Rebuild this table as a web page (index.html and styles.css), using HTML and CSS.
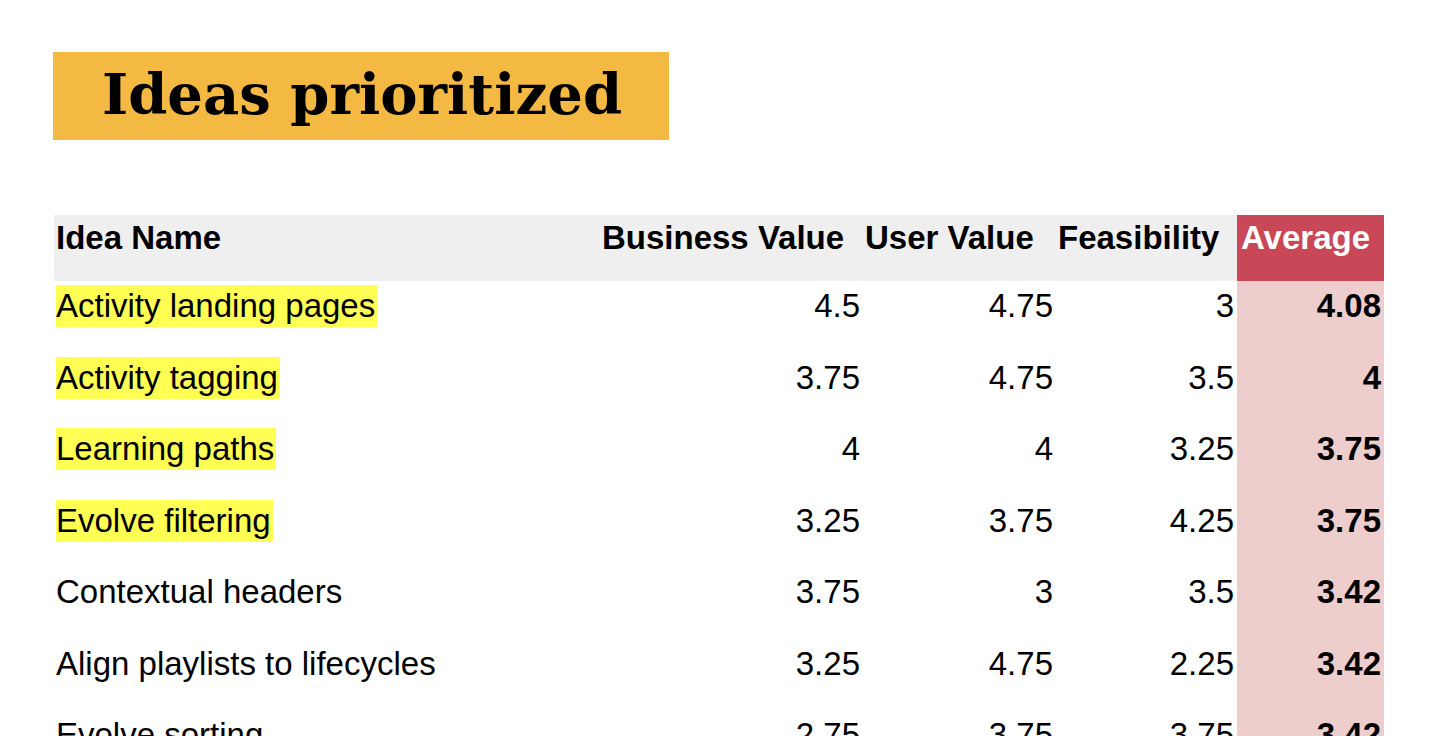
FILE: index.html
```html
<!DOCTYPE html>
<html lang="en">
<head>
<meta charset="utf-8">
<title>Ideas prioritized</title>
<link rel="stylesheet" href="styles.css">
</head>
<body>
<main class="slide">
  <h1 class="title">Ideas prioritized</h1>
  <table class="ideas">
    <colgroup>
      <col class="c-name"><col class="c-bv"><col class="c-uv"><col class="c-f"><col class="c-avg">
    </colgroup>
    <thead>
      <tr>
        <th class="name">Idea Name</th>
        <th>Business Value</th>
        <th>User Value</th>
        <th>Feasibility</th>
        <th class="avg">Average</th>
      </tr>
    </thead>
    <tbody>
      <tr><td class="name"><span class="hl">Activity landing pages</span></td><td>4.5</td><td>4.75</td><td>3</td><td class="avg">4.08</td></tr>
      <tr><td class="name"><span class="hl">Activity tagging</span></td><td>3.75</td><td>4.75</td><td>3.5</td><td class="avg">4</td></tr>
      <tr><td class="name"><span class="hl">Learning paths</span></td><td>4</td><td>4</td><td>3.25</td><td class="avg">3.75</td></tr>
      <tr><td class="name"><span class="hl">Evolve filtering</span></td><td>3.25</td><td>3.75</td><td>4.25</td><td class="avg">3.75</td></tr>
      <tr><td class="name">Contextual headers</td><td>3.75</td><td>3</td><td>3.5</td><td class="avg">3.42</td></tr>
      <tr><td class="name">Align playlists to lifecycles</td><td>3.25</td><td>4.75</td><td>2.25</td><td class="avg">3.42</td></tr>
      <tr><td class="name">Evolve sorting</td><td>2.75</td><td>3.75</td><td>3.75</td><td class="avg">3.42</td></tr>
    </tbody>
  </table>
</main>
</body>
</html>
```
FILE: styles.css
```css
html, body {
  margin: 0;
  padding: 0;
  background: #ffffff;
  overflow: hidden;
}

.slide {
  padding: 52px 0 0 53px;
}

.title {
  box-sizing: border-box;
  width: 616px;
  height: 88px;
  margin: 0;
  padding: 9px 0 0 49px;
  background: #f4b942;
  color: #000000;
  font-family: "DejaVu Serif", "Liberation Serif", serif;
  font-weight: bold;
  font-size: 56px;
  line-height: normal;
  white-space: nowrap;
}

.ideas {
  margin: 75px 0 0 1px;
  border-collapse: collapse;
  table-layout: fixed;
  width: 1330px;
  font-family: "Liberation Sans", Arial, sans-serif;
  font-size: 33px;
  line-height: 38px;
  color: #000000;
}

.c-name { width: 546px; }
.c-bv { width: 263px; }
.c-uv { width: 193px; }
.c-f { width: 181px; }
.c-avg { width: 147px; }

.ideas th {
  height: 66px;
  box-sizing: border-box;
  padding: 4px 2px 0 2px;
  vertical-align: top;
  text-align: left;
  font-weight: bold;
  background: #efefef;
  white-space: nowrap;
}

.ideas th.avg {
  background: #c84857;
  color: #ffffff;
  padding-left: 4px;
}

.ideas td {
  height: 71.5px;
  box-sizing: border-box;
  padding: 6px 3px 0 2px;
  vertical-align: top;
  text-align: right;
  white-space: nowrap;
}

.ideas td.name {
  text-align: left;
}

.ideas td.avg {
  background: #eecdcd;
  font-weight: bold;
}

.hl {
  background: #ffff54;
  padding: 2px 2px 3px 0;
}
```
